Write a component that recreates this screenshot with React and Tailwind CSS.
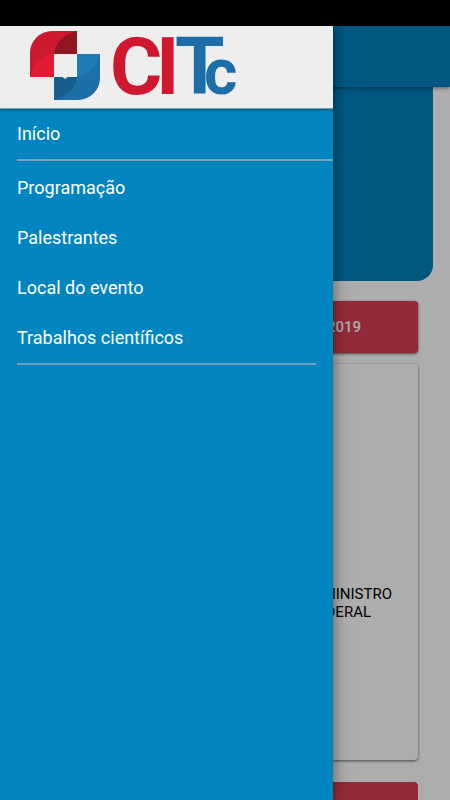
function Logo() {
  return (
    <svg className="h-[82px] w-[250px] shrink-0" viewBox="0 26 250 82" role="img" aria-label="CITc">
      <path d="M30 77V53A22 22 0 0 1 52 31H77V54H54V77Z" fill="#cd1930" />
      <path d="M30 77C33 65 42 56 54 53V77Z" fill="#e21b34" />
      <path d="M54 54C55 43 64 34 77 31V54Z" fill="#8f1721" />
      <path d="M77 54H100V78A22 22 0 0 1 78 100H54V77H77Z" fill="#1c6fa9" />
      <path d="M77 54H100C98 66 89 75 77 77Z" fill="#1e7bb6" />
      <path d="M54 77H77C76 88 67 97 54 100Z" fill="#195e8d" />
      <path d="M61 76H69L65 79Z" fill="#eee" />
      <g className="font-[Roboto,sans-serif] text-[80px] font-bold">
        <text x="110" y="94" fill="#cf172f">C</text>
        <text x="156" y="94" fill="#cf172f">I</text>
        <text x="175" y="94" fill="#1c6da8">T</text>
        <text x="204" y="94" fill="#1c6da8" className="text-[64px]">c</text>
      </g>
    </svg>
  );
}

function MenuLink({ children }) {
  return (
    <a href="#" className="flex h-[50px] items-center text-lg">
      {children}
    </a>
  );
}

export default function App() {
  return (
    <div className="relative flex h-screen flex-col overflow-hidden bg-white font-[Roboto,sans-serif]">
      <div className="h-[26px] shrink-0 bg-black" />
      <header className="relative h-[61px] shrink-0 bg-[#0082bd] shadow-[0_1px_4px_rgba(0,0,0,0.5)]" />
      <main className="flex flex-col px-[17px]">
        <section className="h-[194px] shrink-0 rounded-b-2xl bg-[#0082bd]" />
        <div className="flex flex-col px-[15px] pt-5">
          <button className="h-[52px] shrink-0 rounded-sm bg-[#d83f54] pr-[57px] text-right text-[15px] font-medium text-white shadow-[0_1px_3px_rgba(0,0,0,0.6)]">
            2019
          </button>
          <article className="mt-[11px] flex h-[396px] shrink-0 flex-col rounded-sm bg-white pt-[221px] text-right text-[15px] leading-[18px] text-black shadow-[0_1px_3px_rgba(0,0,0,0.6)]">
            <p className="pr-[26px]">MINISTRO</p>
            <p className="pr-[47px]">FEDERAL</p>
          </article>
          <div className="mt-[22px] h-[52px] shrink-0 rounded-sm bg-[#d83f54]" />
        </div>
      </main>
      <div className="absolute inset-x-0 top-[26px] bottom-0 bg-black/32">
        <aside className="flex h-full w-[74%] flex-col bg-[#0085c0] text-white shadow-[0_0_14px_rgba(0,0,0,0.5)]">
          <div className="flex h-[83px] shrink-0 border-b border-[#8798a8] bg-[#eee] shadow-[0_1px_3px_rgba(0,0,0,0.3)]">
            <Logo />
          </div>
          <nav className="flex flex-col pl-[17px]">
            <MenuLink>Início</MenuLink>
            <hr className="mb-[2px] border-t-2 border-[#809fb8]" />
            <MenuLink>Programação</MenuLink>
            <MenuLink>Palestrantes</MenuLink>
            <MenuLink>Local do evento</MenuLink>
            <MenuLink>Trabalhos científicos</MenuLink>
            <hr className="mr-[17px] border-t-2 border-[#6fa0c0]" />
          </nav>
        </aside>
      </div>
    </div>
  );
}
